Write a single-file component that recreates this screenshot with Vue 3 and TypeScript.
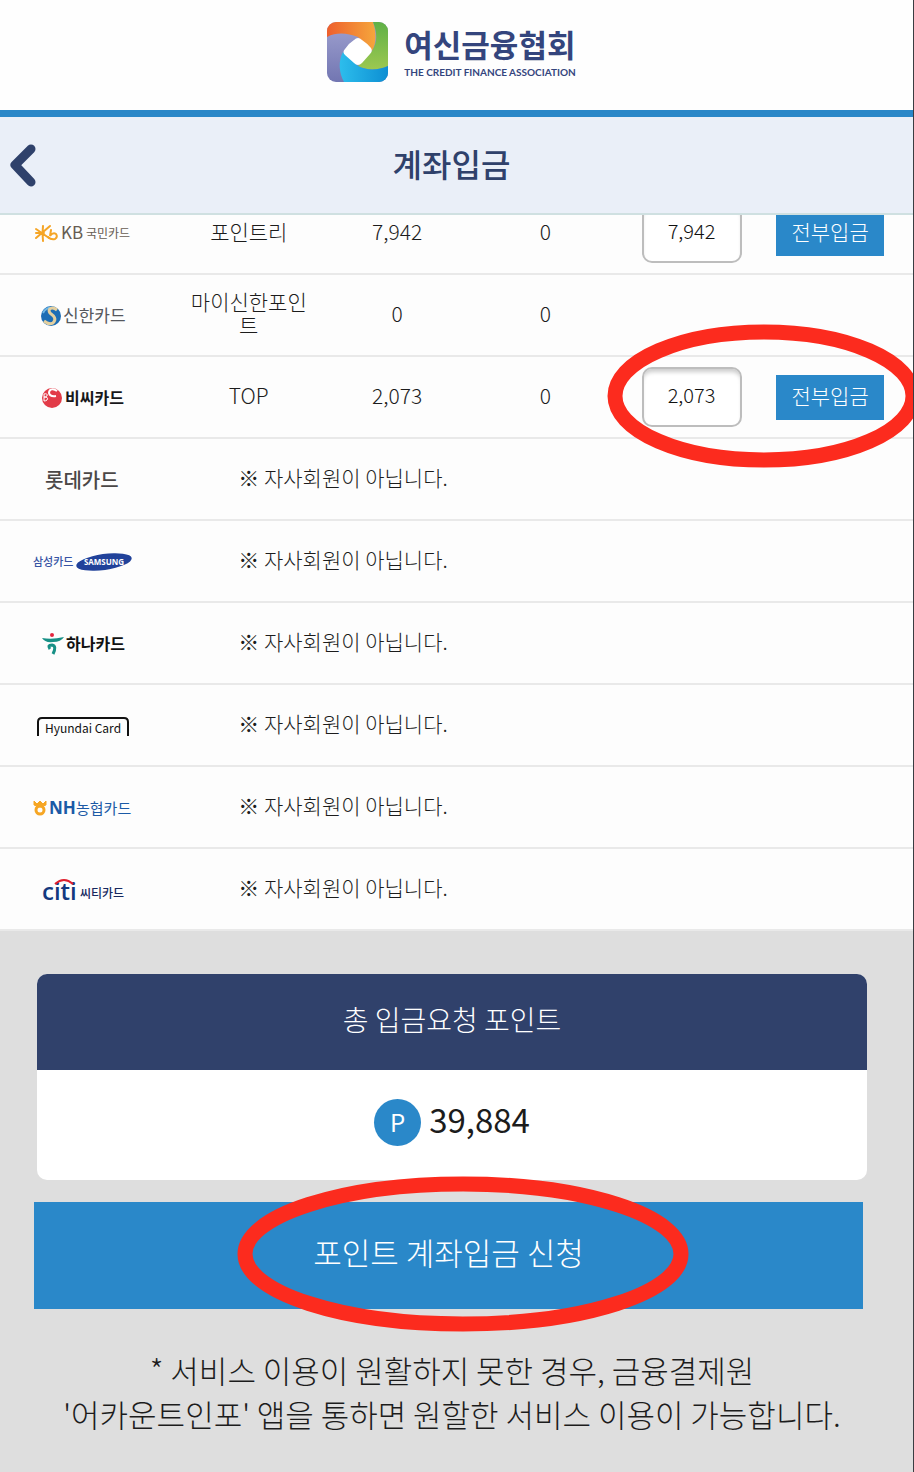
<script setup lang="ts">
import { ref } from 'vue'

interface CardRow {
  id: string
  name: string
  point?: string
  owned?: string
  pending?: string
  amount?: string
  highlighted?: boolean
}

const rows = ref<CardRow[]>([
  { id: 'kb', name: 'KB국민카드', point: '포인트리', owned: '7,942', pending: '0', amount: '7,942' },
  { id: 'shinhan', name: '신한카드', point: '마이신한포인트', owned: '0', pending: '0' },
  { id: 'bc', name: '비씨카드', point: 'TOP', owned: '2,073', pending: '0', amount: '2,073', highlighted: true },
  { id: 'lotte', name: '롯데카드' },
  { id: 'samsung', name: '삼성카드' },
  { id: 'hana', name: '하나카드' },
  { id: 'hyundai', name: 'Hyundai Card' },
  { id: 'nh', name: 'NH농협카드' },
  { id: 'citi', name: '씨티카드' },
])

const total = '39,884'

function depositAll(row: CardRow): void {
  row.amount = row.owned
}
</script>

<template>
  <div class="page">
    <header class="top">
      <div class="brand">
        <svg class="brand-mark" viewBox="0 0 61 60" aria-hidden="true">
          <defs>
            <clipPath id="mark-clip"><rect width="61" height="60" rx="9" /></clipPath>
            <linearGradient id="mark-orange"><stop offset="0" stop-color="#ee5f2c" /><stop offset="1" stop-color="#f5a63c" /></linearGradient>
            <linearGradient id="mark-green" x2="0" y2="1"><stop offset="0" stop-color="#5fb046" /><stop offset="1" stop-color="#9cc850" /></linearGradient>
            <linearGradient id="mark-blue"><stop offset="0" stop-color="#2dbdec" /><stop offset="1" stop-color="#0d8fd3" /></linearGradient>
            <linearGradient id="mark-purple" x2="0" y2="1"><stop offset="0" stop-color="#9fa1cf" /><stop offset="1" stop-color="#7276b2" /></linearGradient>
          </defs>
          <g clip-path="url(#mark-clip)">
            <rect width="61" height="60" fill="url(#mark-purple)" />
            <path d="M0 15C10 10 20 11 31 15L45 29C50 21 49 9 46 0H0Z" fill="url(#mark-orange)" />
            <path d="M46 0C50 10 51 20 45 29L31 44C40 49 52 48 61 44V0Z" fill="url(#mark-green)" />
            <path d="M16 30C11 39 12 51 17 60H61V44C52 48 40 49 31 44L16 30Z" fill="url(#mark-blue)" />
            <path d="M27 18Q31 14 35 18Q41 22 44 26Q46 29 43 32L35 41Q31 45 27 41L18 33Q15 30 18 27Q22 21 27 18Z" fill="#fff" />
          </g>
        </svg>
        <div class="brand-text">
          <span class="brand-ko">여신금융협회</span>
          <span class="brand-en">THE CREDIT FINANCE ASSOCIATION</span>
        </div>
      </div>
      <div class="title-bar">
        <button class="back" type="button" aria-label="뒤로">
          <svg viewBox="0 0 28 44" aria-hidden="true"><path d="M22 6L6 22L22 39" /></svg>
        </button>
        <h1>계좌입금</h1>
      </div>
    </header>

    <main>
      <table class="cards">
        <colgroup>
          <col class="c-logo" />
          <col class="c-name" />
          <col class="c-owned" />
          <col class="c-pending" />
          <col class="c-amount" />
          <col />
        </colgroup>
        <tbody>
          <tr v-for="row in rows" :key="row.id">
            <th scope="row">
              <svg class="logo" viewBox="0 0 120 40" role="img" :aria-label="row.name">
                <g v-if="row.id === 'kb'">
                  <g fill="none" stroke="#f5a526" stroke-width="2" stroke-linecap="round">
                    <path d="M21 13Q20 20 21 28M14 16L27 25M28 13L14 25M14 20L22 20" />
                    <path d="M29 17L28 23Q31 19 34 21Q36 24 33 26Q29 27 26 24" />
                  </g>
                  <text x="39" y="26" class="t17" fill="#665c52">KB</text>
                  <text x="64" y="25" class="t12" fill="#665c52">국민카드</text>
                </g>
                <g v-else-if="row.id === 'shinhan'">
                  <circle cx="29" cy="21" r="10" fill="#1c6db5" />
                  <path d="M21 18Q24 12 31 13" fill="none" stroke="#6eb5e4" stroke-width="2" />
                  <path d="M35 15C30 11 25 14 28 18C32 21 35 24 31 28Q27 30 22 26" fill="none" stroke="#e3cf9f" stroke-width="3" />
                  <text x="41" y="27" class="t17" fill="#55575c">신한카드</text>
                </g>
                <g v-else-if="row.id === 'bc'">
                  <circle cx="30" cy="21" r="10" fill="#e23b48" />
                  <path d="M35 14C31 11 27 12 27 16Q28 20 34 19" fill="none" stroke="#fff" stroke-width="2" />
                  <path d="M22 17V24M22 17Q26 16 25 19Q24 20 22 20Q27 20 25 23Q24 24 22 24" fill="none" stroke="#fff" stroke-width="1" />
                  <text x="43" y="27" class="t16 bold" fill="#17171a">비씨카드</text>
                </g>
                <text v-else-if="row.id === 'lotte'" x="23" y="29" class="t20 medium" fill="#4b4746">롯데카드</text>
                <g v-else-if="row.id === 'samsung'">
                  <text x="11" y="25" class="t11 medium" fill="#3653a4">삼성카드</text>
                  <ellipse cx="82" cy="21" rx="28" ry="8" transform="rotate(-8 82 21)" fill="#21429a" />
                  <text x="82" y="24" text-anchor="middle" class="t8 bold latin" fill="#fff">SAMSUNG</text>
                </g>
                <g v-else-if="row.id === 'hana'">
                  <circle cx="30" cy="12" r="2" fill="#e4253e" />
                  <path d="M20 15Q30 17 42 14Q39 19 31 19Q23 20 20 15Z" fill="#179086" />
                  <path d="M28 26Q25 22 30 22Q35 23 31 31" fill="none" stroke="#179086" stroke-width="3" />
                  <text x="44" y="27" class="t16 bold" fill="#111">하나카드</text>
                </g>
                <g v-else-if="row.id === 'hyundai'">
                  <path d="M16 31V17Q16 13 20 13H102Q106 13 106 17V31" fill="none" stroke="#111" stroke-width="2" />
                  <text x="61" y="28" text-anchor="middle" class="t12" fill="#111">Hyundai Card</text>
                </g>
                <g v-else-if="row.id === 'nh'">
                  <circle cx="18" cy="23" r="4" fill="none" stroke="#f6a624" stroke-width="3" />
                  <path d="M12 14L15 17L18 14L21 17L24 14V18L18 20L12 18Z" fill="#f6a624" stroke="#f6a624" stroke-width="1" />
                  <text x="27" y="27" class="t17 bold latin" fill="#1b5aa6">NH</text>
                  <text x="54" y="27" class="t15" fill="#1b5aa6">농협카드</text>
                </g>
                <g v-else>
                  <text x="20" y="31" class="t24 semi latin" fill="#14397f">citi</text>
                  <path d="M33 15Q42 7 51 15" fill="none" stroke="#df1f2d" stroke-width="2" />
                  <text x="58" y="29" class="t12 medium" fill="#17295f">씨티카드</text>
                </g>
              </svg>
            </th>
            <template v-if="row.point">
              <td class="text name">{{ row.point }}</td>
              <td class="text">{{ row.owned }}</td>
              <td class="text">{{ row.pending }}</td>
              <td>
                <input v-if="row.amount" v-model="row.amount" type="text" inputmode="numeric" :aria-label="row.name + ' 입금 포인트'" />
              </td>
              <td class="action">
                <button v-if="row.amount" class="all" type="button" @click="depositAll(row)">전부입금</button>
                <svg v-if="row.highlighted" class="ring ring-row" viewBox="0 0 314 144" aria-hidden="true">
                  <ellipse cx="157" cy="72" rx="149" ry="64" />
                </svg>
              </td>
            </template>
            <td v-else class="text message" colspan="5">※ 자사회원이 아닙니다.</td>
          </tr>
        </tbody>
      </table>

      <section class="summary">
        <div class="total">
          <h2>총 입금요청 포인트</h2>
          <p><span class="coin">P</span><strong>{{ total }}</strong></p>
        </div>
        <div class="submit-wrap">
          <button class="submit" type="button">포인트 계좌입금 신청</button>
          <svg class="ring ring-submit" viewBox="0 0 452 156" aria-hidden="true">
            <ellipse cx="226" cy="78" rx="218" ry="70" />
          </svg>
        </div>
        <p class="note">* 서비스 이용이 원활하지 못한 경우, 금융결제원<br />'어카운트인포' 앱을 통하면 원할한 서비스 이용이 가능합니다.</p>
      </section>
    </main>
  </div>
</template>

<style>
body {
  margin: 0;
  background: #dedede;
}
</style>

<style scoped>
.page {
  box-sizing: border-box;
  min-height: 100vh;
  overflow: hidden;
  border-right: 1px solid #3a3d42;
  background: #dedede;
  color: #1c1c1c;
  font-family: "Noto Sans CJK KR", "Noto Sans", sans-serif;
  font-weight: 300;
}
button,
input {
  font: inherit;
}
.top {
  position: relative;
  z-index: 1;
  background: #fefefe;
}
.brand {
  display: flex;
  align-items: center;
  justify-content: center;
  gap: 16px;
  height: 110px;
  padding: 0 10px 6px 0;
  box-sizing: border-box;
}
.brand-mark {
  width: 61px;
  height: 60px;
}
.brand-text {
  display: flex;
  flex-direction: column;
  gap: 4px;
  color: #34457d;
  font-weight: 700;
}
.brand-ko {
  font-size: 31px;
  line-height: 36px;
}
.brand-en {
  font-family: Lato, sans-serif;
  font-size: 10px;
  line-height: 12px;
}
.title-bar {
  display: flex;
  align-items: center;
  height: 96px;
  padding-right: 10px;
  border-top: 7px solid #2a87c8;
  border-bottom: 2px solid #cfe0e1;
  background: #eaeff8;
}
.back {
  width: 46px;
  height: 60px;
  padding: 0 0 0 9px;
  border: 0;
  background: none;
  text-align: left;
}
.back svg {
  display: block;
  width: 28px;
  height: 44px;
}
.back path {
  fill: none;
  stroke: #2f416b;
  stroke-width: 9;
  stroke-linecap: round;
  stroke-linejoin: round;
}
h1 {
  flex: 1;
  margin: 0;
  padding: 0 46px 4px 0;
  color: #2f416b;
  font-size: 32px;
  font-weight: 500;
  line-height: 40px;
  text-align: center;
}
.cards {
  width: 100%;
  margin-top: -22px;
  border-collapse: separate;
  border-spacing: 0;
  table-layout: fixed;
  background: #fdfdfd;
  font-size: 21px;
  line-height: 23px;
}
.c-logo {
  width: 18%;
}
.c-name,
.c-pending {
  width: 18.5%;
}
.c-owned {
  width: 14%;
}
.c-amount {
  width: 13.5%;
}
th,
td {
  box-sizing: border-box;
  height: 82px;
  padding: 0;
  border-bottom: 2px solid #e9e9e9;
  text-align: center;
  vertical-align: middle;
}
td.text {
  padding-bottom: 4px;
}
td.name {
  padding-right: 20px;
  padding-left: 20px;
  word-break: break-all;
}
td.message {
  padding-left: 74px;
  text-align: left;
}
td.action {
  position: relative;
  padding-right: 6px;
}
.logo {
  display: block;
  width: 120px;
  height: 40px;
  margin: 0 auto;
}
.t8 { font-size: 8px; }
.t11 { font-size: 11px; }
.t12 { font-size: 12px; }
.t15 { font-size: 15px; }
.t16 { font-size: 16px; }
.t17 { font-size: 17px; }
.t20 { font-size: 20px; }
.t24 { font-size: 24px; }
.logo text {
  font-weight: 400;
}
.logo .medium {
  font-weight: 500;
}
.logo .semi {
  font-weight: 600;
}
.logo .bold {
  font-weight: 700;
}
.logo .latin {
  font-family: "Open Sans", sans-serif;
}
input {
  box-sizing: border-box;
  width: 100px;
  height: 60px;
  padding: 0 0 6px;
  border: 2px solid #bdbdbd;
  border-radius: 10px;
  background: #fff;
  box-shadow: inset 0 5px 4px -2px #ccc;
  color: #111;
  font-size: 20px;
  text-align: center;
  vertical-align: middle;
}
.all {
  width: 108px;
  height: 45px;
  padding: 0 0 3px;
  border: 0;
  background: #2a88c9;
  color: #fff;
  vertical-align: middle;
}
.ring {
  position: absolute;
  overflow: visible;
  pointer-events: none;
}
.ring ellipse {
  fill: none;
  stroke: #fc2b1e;
  stroke-width: 15;
}
.ring-row {
  top: -33px;
  right: -8px;
  width: 314px;
  height: 144px;
}
.summary {
  padding: 43px 46px 32px 37px;
}
.total {
  overflow: hidden;
  border-radius: 10px;
  background: #fff;
}
h2 {
  margin: 0;
  padding: 25px 0 31px;
  background: #30416b;
  color: #fff;
  font-size: 28px;
  font-weight: 300;
  line-height: 40px;
  text-align: center;
}
.total p {
  display: flex;
  align-items: center;
  justify-content: center;
  gap: 8px;
  margin: 0;
  height: 110px;
  box-sizing: border-box;
  padding-bottom: 6px;
}
.coin {
  width: 47px;
  height: 47px;
  border-radius: 50%;
  background: #2a88c9;
  color: #fff;
  font-size: 24px;
  font-weight: 400;
  line-height: 46px;
  text-align: center;
}
.total strong {
  padding-bottom: 6px;
  font-size: 33px;
  font-weight: 400;
}
.submit-wrap {
  position: relative;
  margin: 22px 4px 0 -3px;
}
.submit {
  display: block;
  width: 100%;
  height: 107px;
  padding: 0 0 8px;
  border: 0;
  background: #2a88c9;
  color: #fff;
  font-size: 31px;
}
.ring-submit {
  top: -26px;
  left: calc(50% - 212px);
  width: 452px;
  height: 156px;
}
.note {
  margin: 39px -20px 0;
  font-size: 31px;
  line-height: 44px;
  text-align: center;
}
</style>
